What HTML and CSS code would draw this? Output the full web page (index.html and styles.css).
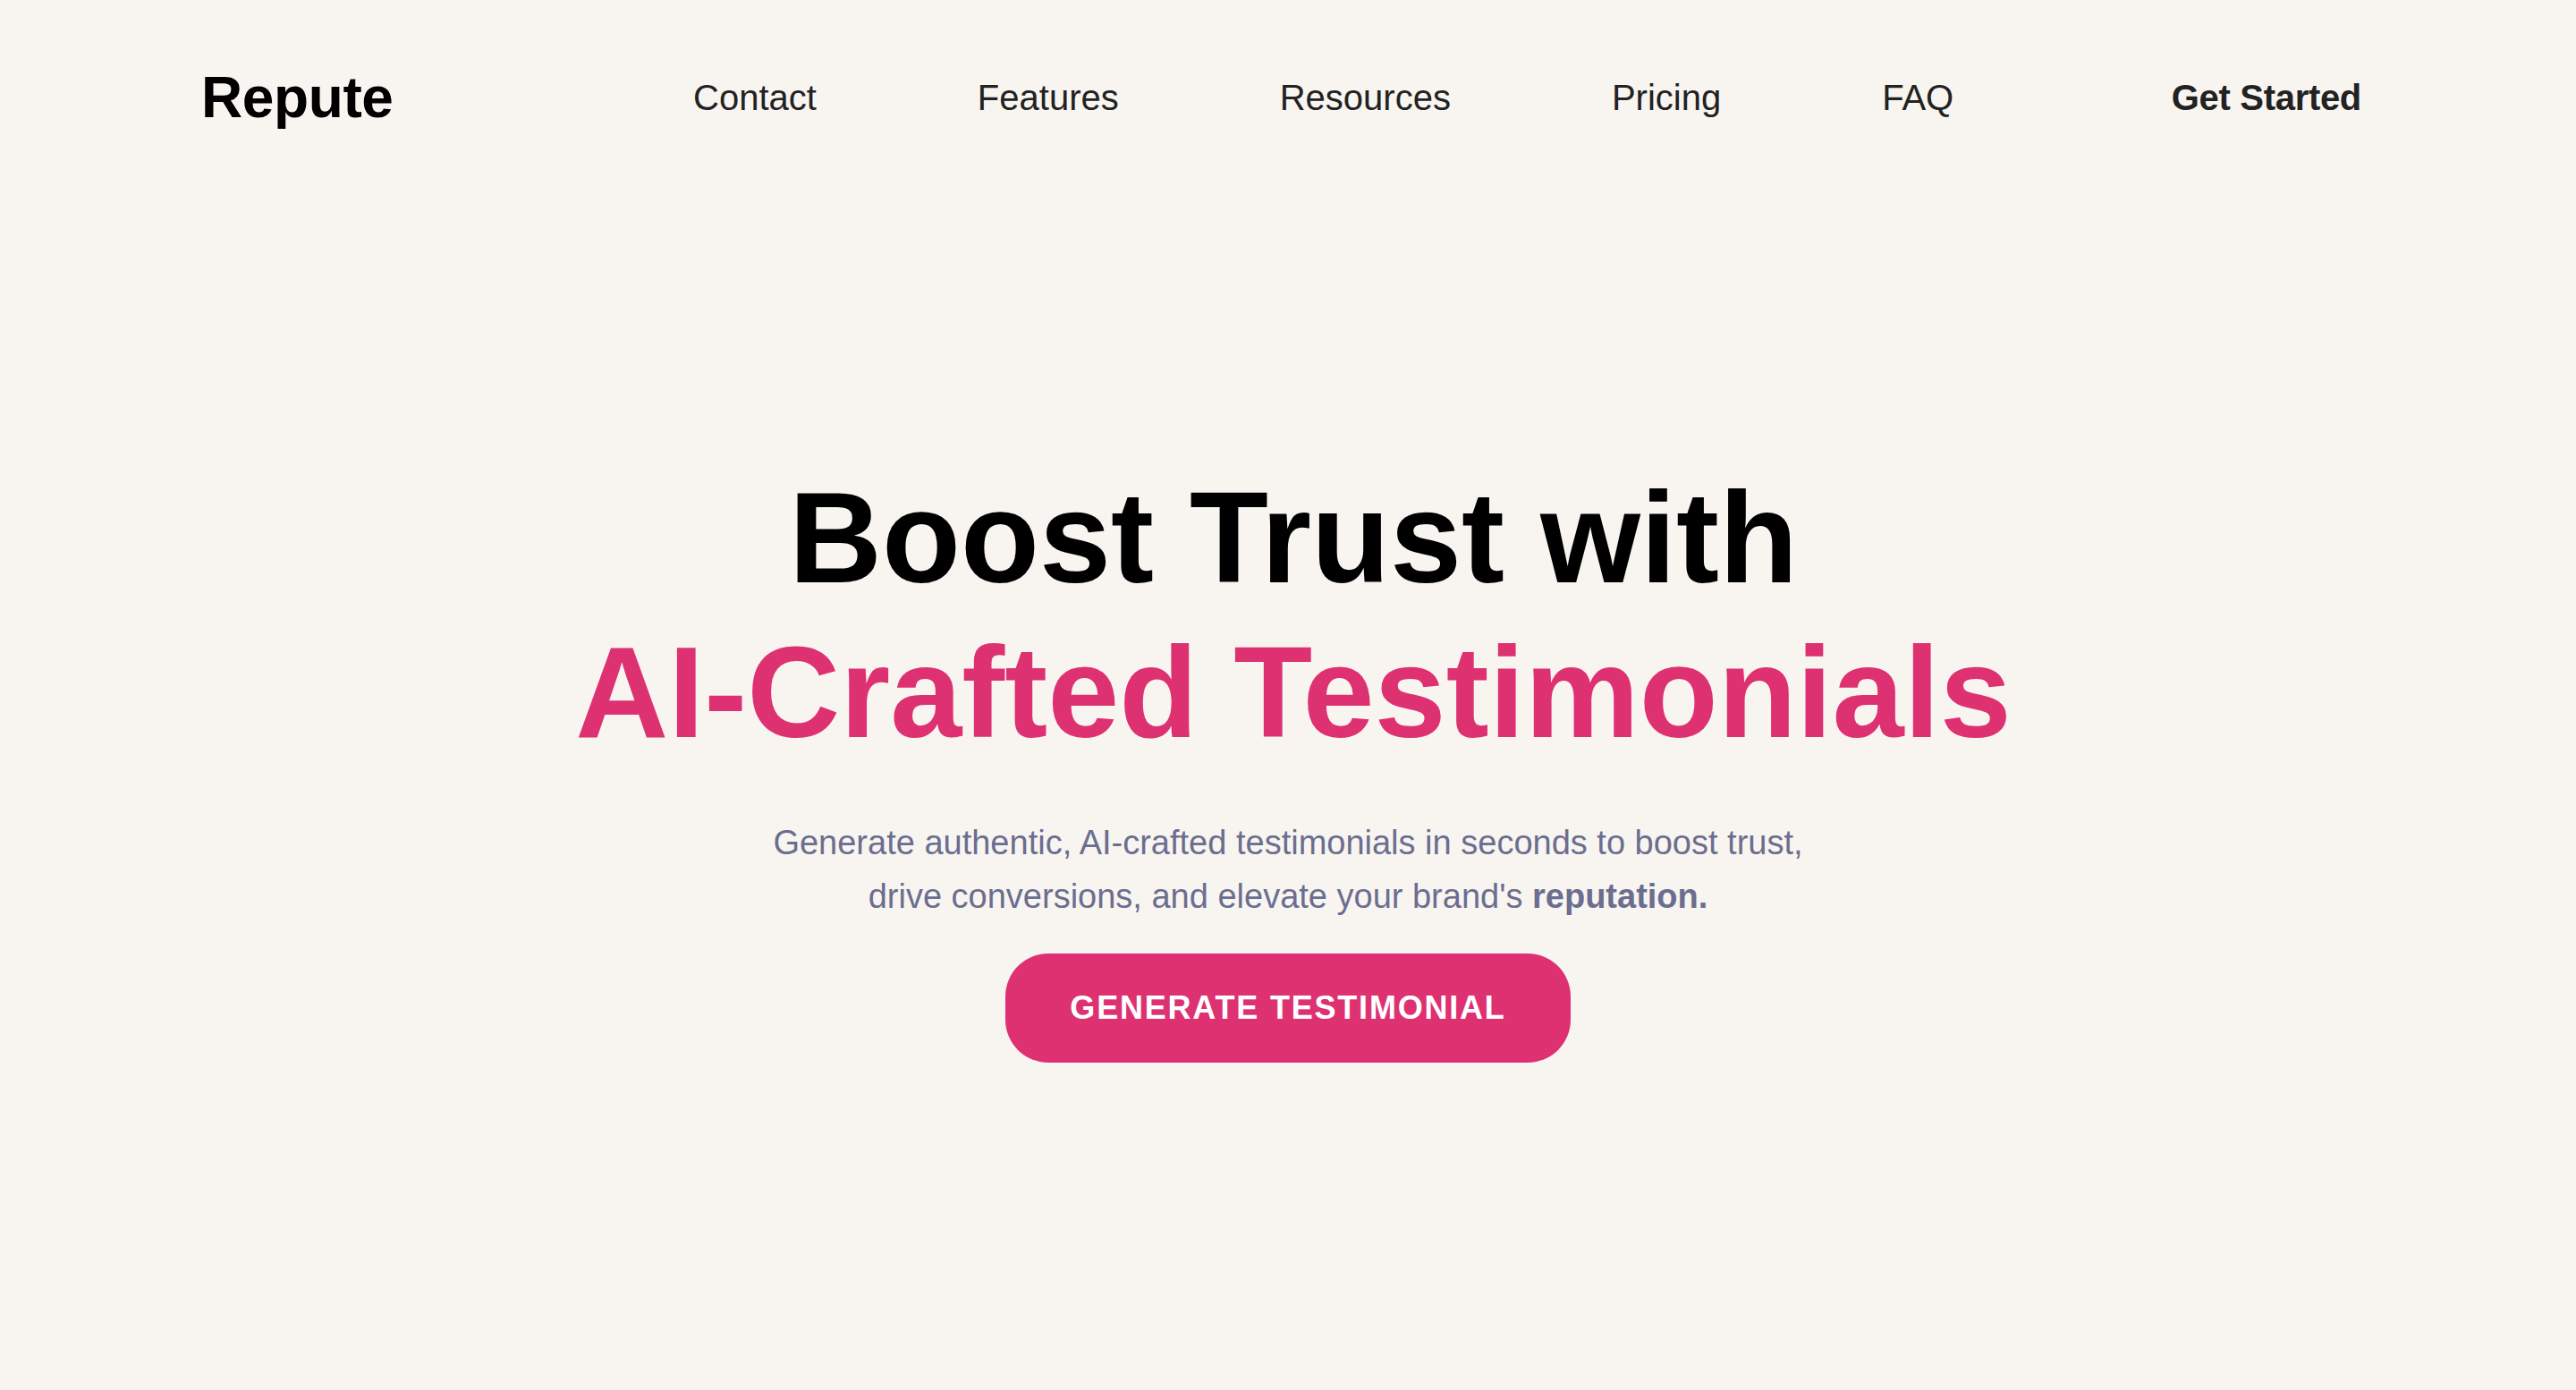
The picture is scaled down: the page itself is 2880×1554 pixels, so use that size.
FILE: index.html
```html
<!DOCTYPE html>
<html lang="en">
<head>
<meta charset="utf-8">
<title>Repute</title>
<link rel="stylesheet" href="styles.css">
</head>
<body>
<header class="site-header">
  <div class="brand"><a class="logo" href="#">Repute</a></div>
  <nav class="main-nav">
    <a href="#">Contact</a>
    <a href="#">Features</a>
    <a href="#">Resources</a>
    <a href="#">Pricing</a>
    <a href="#">FAQ</a>
  </nav>
  <a class="get-started" href="#">Get Started</a>
</header>
<main class="hero">
  <h1 class="hero-title"><span class="title-line">Boost Trust with</span><span class="title-line accent">AI-Crafted Testimonials</span></h1>
  <p class="hero-sub">Generate authentic, AI-crafted testimonials in seconds to boost trust, drive conversions, and elevate your brand's <strong>reputation.</strong></p>
  <a class="cta" href="#">GENERATE TESTIMONIAL</a>
</main>
</body>
</html>
```

FILE: styles.css
```css
html, body {
  margin: 0;
  padding: 0;
}
body {
  background: #f8f5f1;
  font-family: "Liberation Sans", Arial, Helvetica, sans-serif;
  color: #222;
  min-height: 1554px;
}
a {
  text-decoration: none;
  color: inherit;
}
.site-header {
  display: flex;
  align-items: center;
  padding: 72px 240px 0 225px;
}
.brand {
  flex: 0 0 550px;
}
.logo {
  font-size: 64px;
  font-weight: 700;
  color: #000;
  letter-spacing: -0.4px;
}
.main-nav {
  display: flex;
  gap: 180px;
  font-size: 40px;
  color: #222;
}
.get-started {
  margin-left: auto;
  font-size: 40px;
  font-weight: 700;
  color: #222;
  letter-spacing: -0.3px;
}
.hero {
  display: flex;
  flex-direction: column;
  align-items: center;
  text-align: center;
  padding-top: 370px;
}
.hero-title {
  margin: 0;
  padding-left: 12px;
  font-size: 144px;
  line-height: 1.2;
  font-weight: 700;
  color: #000;
  display: flex;
  flex-direction: column;
  align-items: center;
}
.title-line {
  display: block;
  letter-spacing: 0;
}
.accent {
  color: #de3172;
}
.hero-sub {
  margin: 50px 0 0;
  max-width: 1200px;
  font-size: 38px;
  line-height: 60px;
  color: #6b6e8f;
}
.hero-sub strong {
  font-weight: 700;
}
.cta {
  margin-top: 34px;
  display: inline-block;
  background: #de3172;
  color: #fff;
  font-size: 36px;
  font-weight: 700;
  letter-spacing: 1.8px;
  padding: 40px 72px;
  border-radius: 48px;
}
```
